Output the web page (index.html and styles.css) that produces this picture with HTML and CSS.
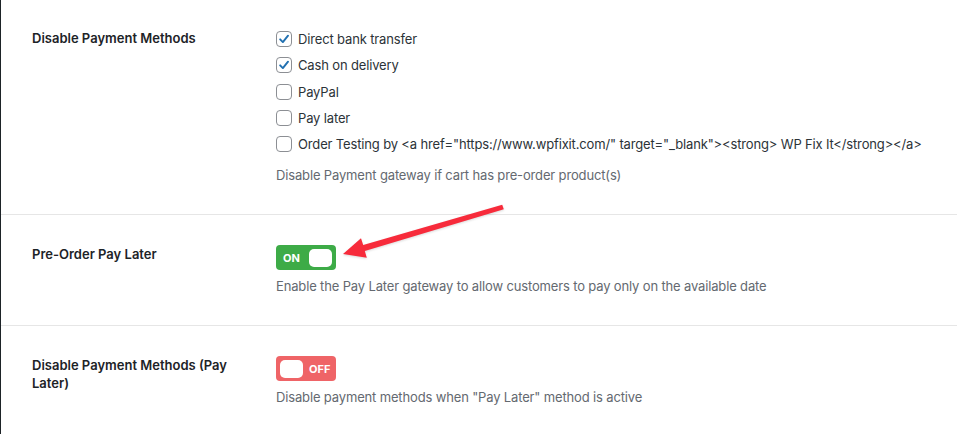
FILE: index.html
```html
<!DOCTYPE html>
<html>
<head>
  <title>Pre-Order Settings</title>
  <link rel="stylesheet" href="styles.css">
</head>
<body>
  <div class="page">
    <div class="setting-row first">
      <div class="setting-label">Disable Payment Methods</div>
      <div class="setting-field">
        <ul class="checkbox-list">
          <li><span class="checkbox checked"><svg viewBox="0 0 16 16"><path d="M3.6 8.4 L6.7 11.5 L12.6 4.2"/></svg></span>Direct bank transfer</li>
          <li><span class="checkbox checked"><svg viewBox="0 0 16 16"><path d="M3.6 8.4 L6.7 11.5 L12.6 4.2"/></svg></span>Cash on delivery</li>
          <li><span class="checkbox"></span>PayPal</li>
          <li><span class="checkbox"></span>Pay later</li>
          <li><span class="checkbox"></span>Order Testing by &lt;a href="https://www.wpfixit.com/" target="_blank"&gt;&lt;strong&gt; WP Fix It&lt;/strong&gt;&lt;/a&gt;</li>
        </ul>
        <p class="description list-description">Disable Payment gateway if cart has pre-order product(s)</p>
      </div>
    </div>

    <div class="setting-row">
      <div class="setting-label">Pre-Order Pay Later</div>
      <div class="setting-field">
        <div class="toggle on">
          <span class="toggle-text">ON</span>
          <span class="toggle-knob"></span>
        </div>
        <p class="description">Enable the Pay Later gateway to allow customers to pay only on the available date</p>
      </div>
    </div>

    <div class="setting-row">
      <div class="setting-label">Disable Payment Methods (Pay Later)</div>
      <div class="setting-field">
        <div class="toggle off">
          <span class="toggle-knob"></span>
          <span class="toggle-text">OFF</span>
        </div>
        <p class="description">Disable payment methods when "Pay Later" method is active</p>
      </div>
    </div>

    <!-- annotation arrow pointing at the toggle -->
    <svg class="arrow" viewBox="0 0 957 434" width="957" height="434">
      <polygon points="343,254 366.8,257.8 364.8,251 503.8,209.2 502.2,204.8 363.2,245 361,238.2"/>
    </svg>
  </div>
</body>
</html>
```

FILE: styles.css
```css
:root {
  --text-color: #1d2327;
  --body-color: #2c3338;
  --muted-color: #646970;
  --divider-color: #e6e6e6;
  --check-color: #2271b1;
  --box-border: #8c8f94;
  --on-color: #3dab47;
  --off-color: #ef6467;
  --arrow-color: #f72b3b;
}

body {
  margin: 0;
  background-color: #fff;
  font-family: Inter, "Noto Sans", sans-serif;
  font-size: 13px;
  line-height: 18px;
  color: var(--body-color);
}

.page {
  position: relative;
  min-height: 434px;
  border-left: 1px solid var(--text-color);
}

.setting-row {
  display: grid;
  grid-template-columns: 200px 1fr;
  column-gap: 44px;
  padding: 30px 0 30px 31px;
  border-bottom: 1px solid var(--divider-color);
}

.setting-row:last-of-type {
  border-bottom: none;
}

.setting-row.first {
  padding-top: 26px;
}

.setting-row.first .setting-label {
  padding-top: 3px;
}

.setting-label {
  font-weight: 600;
  color: var(--text-color);
}

.setting-field {
  letter-spacing: -0.15px;
}

.checkbox-list {
  list-style: none;
  margin: 0;
  padding: 0;
}

.checkbox-list li {
  display: flex;
  align-items: center;
  height: 26.25px;
  gap: 6px;
}

.checkbox {
  box-sizing: border-box;
  width: 16px;
  height: 16px;
  flex: none;
  border: 1px solid var(--box-border);
  border-radius: 4px;
  background-color: #fff;
}

.checkbox svg {
  display: block;
  width: 14px;
  height: 14px;
  fill: none;
  stroke: var(--check-color);
  stroke-width: 2.2;
  stroke-linecap: round;
  stroke-linejoin: round;
}

.description {
  margin: 7px 0 0;
  color: var(--muted-color);
}

.list-description {
  margin-top: 9px;
}

.toggle {
  box-sizing: border-box;
  display: flex;
  align-items: center;
  gap: 8px;
  width: 60px;
  height: 25px;
  padding: 0 4px 0 7px;
  border-radius: 4px;
  color: #fff;
  font-size: 11px;
  font-weight: 700;
  letter-spacing: 0;
}

.toggle.on {
  background-color: var(--on-color);
}

.toggle.off {
  background-color: var(--off-color);
  padding: 0 4px 0 4px;
  gap: 6px;
}

.toggle-knob {
  width: 23px;
  height: 18px;
  border-radius: 5px;
  background-color: #fff;
}

.toggle.on .toggle-knob {
  margin-left: auto;
}

.arrow {
  position: absolute;
  top: 0;
  left: -1px;
  pointer-events: none;
  fill: var(--arrow-color);
  filter: drop-shadow(0 1px 1px rgba(0, 0, 0, 0.15));
}
```
